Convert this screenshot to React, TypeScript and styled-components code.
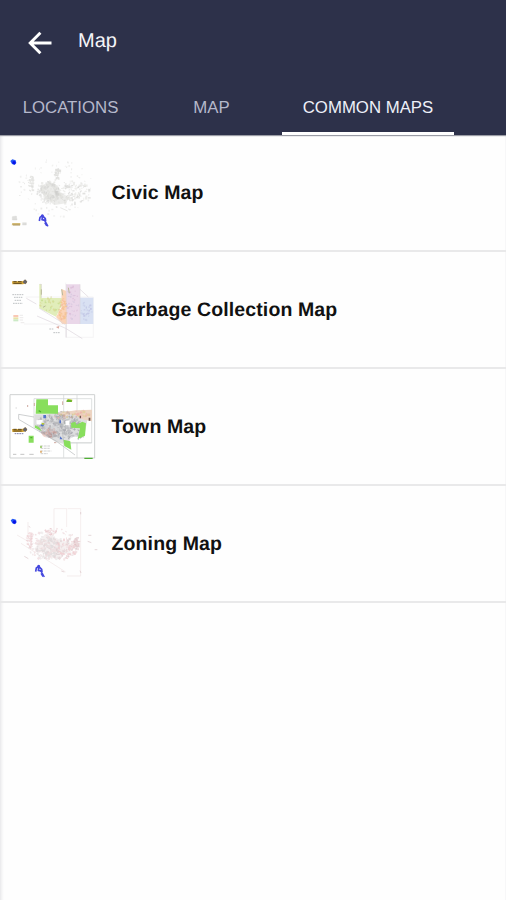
import React from "react";
import styled, { createGlobalStyle } from "styled-components";

const GlobalStyle = createGlobalStyle`
  * { box-sizing: border-box; }
  body { margin: 0; background: #fefefe; font-family: "Liberation Sans", Arial, sans-serif; text-rendering: geometricPrecision; }
`;

const Screen = styled.main`
  min-height: 900px;
  display: flex;
  flex-direction: column;
  background: linear-gradient(90deg, #e9e9eb 0, #f6f6f7 2px, #fefefe 4px, #fefefe calc(100% - 1px), #f0f0f2 100%);
`;

const Header = styled.header`
  height: 135px;
  display: flex;
  flex-direction: column;
  justify-content: space-between;
  background: #2d314a;
  box-shadow: 0 1px 1px #9a9ca5;
`;

const Toolbar = styled.div`
  height: 82px;
  display: flex;
  align-items: center;
  padding-left: 28px;
`;

const BackButton = styled.button`
  display: flex;
  width: 50px;
  height: 24px;
  margin-top: 3px;
  padding: 0;
  border: 0;
  background: none;
`;

const Title = styled.h1`
  margin: 0;
  font-size: 20px;
  line-height: 24px;
  font-weight: 400;
  color: #f5f5f8;
`;

const Tabs = styled.nav`
  height: 53px;
  display: grid;
  grid-template-columns: 141px 141px 172px;
`;

const Tab = styled.button<{ $active?: boolean }>`
  padding: 1px 0 ${(p) => (p.$active ? 0 : 3)}px;
  border: 0;
  border-bottom: ${(p) => (p.$active ? "3px solid #fff" : "0")};
  background: none;
  font: 400 16.8px/49px "Liberation Sans", Arial, sans-serif;
  color: ${(p) => (p.$active ? "#eef0f8" : "#b5b8cb")};
`;

const List = styled.ul`
  margin: 0;
  padding: 0;
  list-style: none;
`;

const Row = styled.li`
  height: 117px;
  display: flex;
  align-items: center;
  border-bottom: 2px solid #e9e9ea;
`;

const Thumb = styled.svg`
  width: 102px;
  height: 115px;
  flex: none;
`;

const Label = styled.span`
  margin-left: 9.5px;
  padding-top: 1px;
  font-size: 19.5px;
  letter-spacing: 0.12px;
  line-height: 24px;
  font-weight: 700;
  color: #111;
`;

function makeRandom(seed: number) {
  let s = seed;
  return () => {
    s = (s * 16807) % 2147483647;
    return s / 2147483647;
  };
}

interface ParcelProps {
  seed: number;
  count: number;
  cx: number;
  cy: number;
  rx: number;
  ry: number;
  colors: string[];
  size?: number;
  opacity?: number;
}

function Parcels({ seed, count, cx, cy, rx, ry, colors, size = 6, opacity = 0.5 }: ParcelProps) {
  const rnd = makeRandom(seed * 7919);
  rnd();
  return (
    <g opacity={opacity}>
      {Array.from({ length: count }, (_, i) => {
        const a = rnd() * Math.PI * 2;
        const d = Math.sqrt(rnd());
        const w = 2 + rnd() * size;
        const h = 2 + rnd() * size;
        const x = cx + Math.cos(a) * d * rx - w / 2;
        const y = cy + Math.sin(a) * d * ry - h / 2;
        return (
          <rect key={i} x={x} y={y} width={w} height={h} fill={colors[i % colors.length]}
            transform={`rotate(${i % 3 === 0 ? 35 : 0} ${x} ${y})`} />
        );
      })}
    </g>
  );
}

const NorthArrow = () => (
  <g fill="none" stroke="#4548de" strokeLinejoin="round">
    <path d="M0 19 L2 8 L9 3 L18 12 L19 20 M10 4 L8 15 L17 17" strokeWidth="5" />
    <path d="M14 15 L20 24 L26 35 M16 24 L22 34" strokeWidth="4" />
    <circle cx="9" cy="3" r="2" strokeWidth="5" />
  </g>
);

const Beacon = () => (
  <g>
    <path d="M-9 -4 L-3 -9 L7 -6 L9 2 L4 8 L-4 5 Z" fill="#2358f5" />
    <circle cx="2" cy="1" r="5" fill="#0810e8" />
  </g>
);

const TownLogo = () => (
  <g>
    <path d="M0 2 H30 L42 -3 L45 7 L33 11 H1 Z" fill="#d4a638" />
    <path d="M4 3 H14 M4 8 H29 M18 3 H29" stroke="#5f491e" strokeWidth="3" />
    <path d="M32 5 L39 -4 L46 3 L40 11 Z" fill="#65636a" />
  </g>
);

const CivicThumb = () => (
  <Thumb viewBox="0 0 306 345">
    <g transform="translate(0 15)">
      <path d="M120 145 L145 123 L174 137 L182 158 L208 172 L198 190 L164 195 L135 177 Z" fill="#ececea" />
      <Parcels seed={71} count={115} cx={168} cy={145} rx={116} ry={88} colors={["#d8d8d5", "#e4e4e1"]} size={4} />
      <Parcels seed={22} count={110} cx={147} cy={156} rx={34} ry={34} colors={["#ccccca", "#deded9"]} size={7} />
      <Parcels seed={99} count={95} cx={220} cy={158} rx={54} ry={36} colors={["#c5c5c2", "#deded9"]} size={7} />
      <Parcels seed={11} count={24} cx={96} cy={134} rx={8} ry={28} colors={["#cecec9"]} />
      <Parcels seed={9} count={24} cx={173} cy={101} rx={8} ry={18} colors={["#c4c4bf"]} />
      <path d="M181 203 L203 213" stroke="#dededb" strokeWidth="2" fill="none" />
      <g transform="translate(40 67)"><Beacon /></g>
      <g transform="translate(118 224)"><NorthArrow /></g>
      <path d="M37 249 H61 V256 H35 Z" fill="#d3bb78" />
      <path d="M39 255 H60" stroke="#947b47" strokeWidth="2" />
      <path d="M67 248 H79 V255 H67 M37 230 L49 228 L51 240 H37 Z M276 228 H280" fill="#dededc" stroke="#d0d0cd" />
    </g>
  </Thumb>
);

const GarbageThumb = () => (
  <Thumb viewBox="0 0 306 345">
    <g transform="translate(0 24)">
      <path d="M77 111 H280 V232 H197 V192 H72 M197 232 V68" fill="none" stroke="#f0eef0" strokeWidth="2" />
      <path d="M118 72 H125 V114 H189 L183 141 L168 170 L118 145 Z" fill="#e1edba" />
      <path d="M185 87 L200 94 L203 192 H187 L168 171 L184 144 Z" fill="#fbd4b7" />
      <path d="M199 73 H240 V192 H202 Z" fill="#ead7e9" />
      <path d="M240 113 H280 V192 H240 Z" fill="#d9e1f3" />
      <path d="M119 73 H124 V113 M118 145 L195 193 M240 73 V192 M199 73 V232 M111 168 L197 205 L247 236 M79 115 L109 132 M240 88 L265 111" fill="none" stroke="#ddd4dc" strokeWidth="2" />
      <Parcels seed={37} count={35} cx={152} cy={133} rx={32} ry={22} colors={["#b9d775", "#d5cc7b"]} size={4} />
      <Parcels seed={73} count={38} cx={189} cy={149} rx={12} ry={36} colors={["#efac87", "#f4b76e"]} size={5} />
      <Parcels seed={33} count={35} cx={219} cy={129} rx={18} ry={50} colors={["#d3adcf", "#c9bfd9"]} size={4} />
      <Parcels seed={82} count={30} cx={260} cy={154} rx={17} ry={35} colors={["#bfc6e5", "#b1b2dc"]} size={4} />
      <path d="M185 88 L188 106 M124 88 V104 M205 83 L208 100 M129 142 L136 138" stroke="#b8b89a" strokeWidth="3" />
      <g transform="translate(36 62)"><TownLogo /></g>
      <path d="M37 104 H70 M42 112 H67 M44 121 H65 M39 130 H68 M148 207 H162 M160 218 H181" stroke="#bfc2c4" strokeWidth="3" strokeDasharray="5 2" />
      <path d="M40 165 H55 V171 H40" fill="#f9c8b5" />
      <path d="M40 172 H55 V178 H40" fill="#e9e2a9" />
      <path d="M40 178 H55 V184 H40" fill="#cceac6" />
      <path d="M59 166 H69 M59 173 H70 M59 180 H69 M62 188 H73" stroke="#e2dfdf" strokeWidth="2" />
      <path d="M168 201 L178 198 L176 206 Z" fill="#dba59b" />
    </g>
  </Thumb>
);

const TownThumb = () => (
  <Thumb viewBox="0 0 306 345">
    <g transform="translate(0 18)">
      <path d="M30 59 H284 V249 H30 Z" fill="#fff" stroke="#cfd1d1" strokeWidth="3" />
      <path d="M102 71 H275 V204 H191 V248 M191 60 V116 M231 60 V121 M231 203 V249 M191 203 H275 M102 71 V157" fill="none" stroke="#cfd2d1" strokeWidth="2" />
      <path d="M103 118 L142 118 L190 108 L260 109 L261 140 L252 188 L214 184 L203 210 L166 200 L135 180 L102 151 Z" fill="#dededf" />
      <path d="M176 114 L228 106 L276 104 V139 L251 134 L218 117 L180 124 Z" fill="#ecd4c2" />
      <Parcels seed={46} count={190} cx={164} cy={151} rx={54} ry={36} colors={["#9b9ca4", "#b9babe", "#aaa9ae", "#cfcfd2"]} size={8} opacity={0.72} />
      <Parcels seed={19} count={65} cx={216} cy={160} rx={38} ry={37} colors={["#9b9ca4", "#bbbcc0", "#adb4b1"]} size={7} opacity={0.75} />
      <Parcels seed={52} count={45} cx={147} cy={171} rx={20} ry={16} colors={["#ba7e79", "#de9a89", "#c9aeaf"]} size={6} />
      <Parcels seed={68} count={36} cx={245} cy={118} rx={29} ry={13} colors={["#ef9b98", "#ddc97e", "#efabad"]} size={5} />
      <Parcels seed={31} count={32} cx={191} cy={121} rx={30} ry={13} colors={["#e59f91", "#ae9a96", "#d0c275"]} size={5} />
      <path d="M109 73 H144 V91 H174 V116 H107 Z M213 144 L226 140 L229 149 L247 140 L258 145 L255 182 L233 192 L240 160 L214 158 Z M86 182 H101 V203 H86 Z M190 194 L211 199 L214 224 L193 213 Z M105 151 L117 156 L125 168 L104 158 Z" fill="#88de5d" />
      <path d="M109 136 L129 134 L125 149 L110 148 Z M196 138 L209 136 L208 151 L197 151 Z" fill="#fff" />
      <path d="M56 118 L102 126 M56 118 V133 L107 163 L168 198 L225 240 M166 123 L184 146 L191 200 M142 119 L160 139 L202 160" fill="none" stroke="#b5b8ba" strokeWidth="2" />
      <path d="M130 120 H138 V130 H130 Z M181 184 L188 193 H179 Z M122 148 H131 V154 H122 Z M178 136 H183 V145 H178 Z" fill="#5574c9" />
      <path d="M123 143 L134 145 L128 151 Z M203 71 L217 74 L216 81 H199 Z" fill="#b4c633" />
      <path d="M200 78 H215 M253 250 H278 M116 107 L123 111 M91 188 H97" stroke="#4faf34" strokeWidth="4" />
      <path d="M239 122 H243 V130 H239 Z M266 128 H271 V137 H266 Z" fill="#6f5550" />
      <path d="M103 84 V93 M188 79 V90 M162 203 H169 M83 90 V96" stroke="#cfaaa2" strokeWidth="3" />
      <g transform="translate(36 160)"><TownLogo /></g>
      <path d="M44 176 H70" stroke="#7e80ac" strokeWidth="3" strokeDasharray="5 2" />
      <path d="M122 213 H152 M122 220 H149 M122 228 H154 M122 236 H144" stroke="#b9baba" strokeWidth="2" strokeDasharray="8 2" />
      <path d="M120 212 H126 V219 H120 Z" fill="#a7cf7c" />
      <path d="M120 227 H126 V233 H120 Z" fill="#e1b67f" />
      <path d="M39 238 H49 M61 238 H73 M88 238 H101 M47 99 H50" stroke="#c4c5c5" strokeWidth="3" />
    </g>
  </Thumb>
);

const ZoningThumb = () => (
  <Thumb viewBox="0 0 306 345">
    <g transform="translate(0 12)">
      <path d="M162 120 V56 H200 V111 M203 56 H242 V258 H201 M84 96 V157 M51 135 L84 154 M63 160 L197 246" fill="none" stroke="#f3eaeb" strokeWidth="2.5" />
      <path d="M103 177 L135 132 L185 150 L231 168 L208 188 L166 207 Z" fill="#f5f0f0" />
      <Parcels seed={41} count={150} cx={160} cy={163} rx={80} ry={50} colors={["#eed8db", "#e9e5e6", "#f2dfe0"]} size={6} opacity={0.7} />
      <Parcels seed={85} count={110} cx={144} cy={173} rx={37} ry={32} colors={["#d8d4d5", "#ebd7d8"]} size={7} opacity={0.6} />
      <Parcels seed={63} count={65} cx={200} cy={177} rx={36} ry={32} colors={["#dfcdd0", "#efc9cd"]} size={6} opacity={0.7} />
      <Parcels seed={11} count={30} cx={91} cy={149} rx={10} ry={23} colors={["#e9bfc4"]} size={5} />
      <Parcels seed={38} count={34} cx={232} cy={160} rx={8} ry={19} colors={["#dfb4ba", "#d3b4b7"]} size={6} />
      <Parcels seed={39} count={20} cx={153} cy={124} rx={17} ry={9} colors={["#dda8af"]} size={4} />
      <path d="M265 136 H274 M263 154 L274 158 M284 179 H292 M242 66 V73 M240 242 L243 249 M86 109 L91 112 M73 199 L85 206 M184 243 L193 246" stroke="#d9c4c7" strokeWidth="2" />
      <g transform="translate(41 95)"><Beacon /></g>
      <g transform="translate(107 226)"><NorthArrow /></g>
    </g>
  </Thumb>
);

const maps = [
  { name: "Civic Map", Preview: CivicThumb },
  { name: "Garbage Collection Map", Preview: GarbageThumb },
  { name: "Town Map", Preview: TownThumb },
  { name: "Zoning Map", Preview: ZoningThumb },
];

export default function App() {
  return (
    <>
      <GlobalStyle />
      <Screen>
        <Header>
          <Toolbar>
            <BackButton aria-label="Back">
              <svg width="24" height="24" viewBox="0 0 24 24" fill="none" stroke="#fff" strokeWidth="2.9">
                <path d="M12.4 1.7 L2.2 12 L12.4 22.3 M2.2 12 H23.5" />
              </svg>
            </BackButton>
            <Title>Map</Title>
          </Toolbar>
          <Tabs>
            <Tab>LOCATIONS</Tab>
            <Tab>MAP</Tab>
            <Tab $active>COMMON MAPS</Tab>
          </Tabs>
        </Header>
        <List>
          {maps.map(({ name, Preview }) => (
            <Row key={name}>
              <Preview />
              <Label>{name}</Label>
            </Row>
          ))}
        </List>
      </Screen>
    </>
  );
}
